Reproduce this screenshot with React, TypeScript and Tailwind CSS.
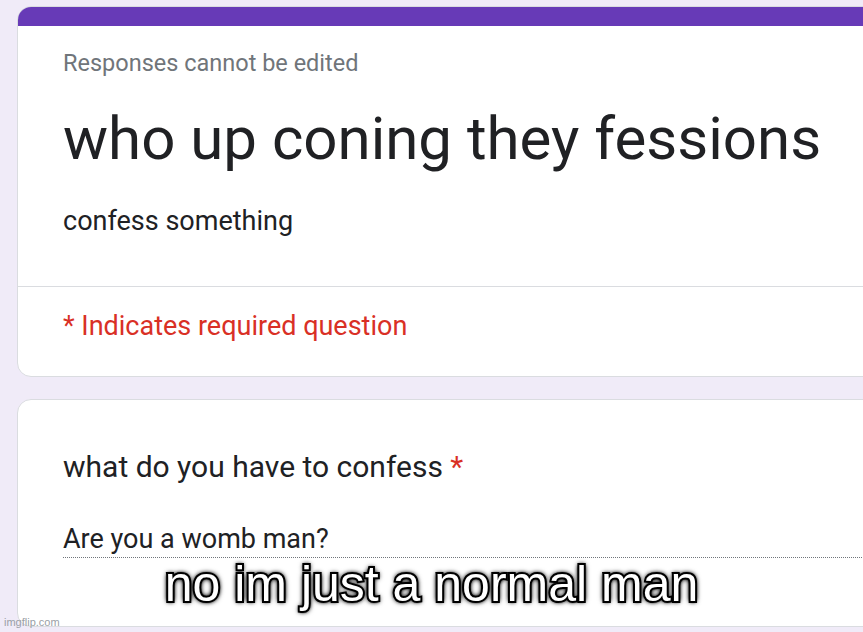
const roboto = { fontFamily: 'Roboto, "Liberation Sans", sans-serif' };

export default function App() {
    return (
        <div
            className="relative w-[863px] h-[632px] overflow-hidden bg-[#f0ebf8] pt-[6px]"
            style={roboto}
        >
            {/* header card */}
            <div className="ml-[17px] w-[900px] rounded-[14px] border border-[#dadce0] bg-white overflow-hidden">
                <div className="h-[19px] bg-[#673ab7]" />
                <div className="pl-[45px] pt-[21px] pb-[47px]">
                    <div className="text-[23.5px] leading-[32px] text-[#70757a]">
                        Responses cannot be edited
                    </div>
                    <div className="mt-[24px] text-[60px] leading-[72px] text-[#202124]">
                        who up coning they fessions
                    </div>
                    <div className="mt-[28px] text-[27px] leading-[36px] text-[#202124]">
                        confess something
                    </div>
                </div>
                <div className="h-px bg-[#dadce0]" />
                <div className="pl-[45px] pt-[21px] pb-[32px] text-[27px] leading-[36px] text-[#d93025]">
                    * Indicates required question
                </div>
            </div>

            {/* question card */}
            <div className="mt-[22px] ml-[17px] w-[900px] h-[228px] rounded-[14px] border border-[#dadce0] bg-white pl-[45px] pt-[47px]">
                <div className="text-[30px] leading-[40px] text-[#202124]">
                    what do you have to confess <span className="text-[#d93025]">*</span>
                </div>
                <div className="mt-[34px] border-b border-dotted border-[#70757a] text-[27px] leading-[36px] text-[#202124]">
                    Are you a womb man?
                </div>
            </div>

            {/* meme caption */}
            <div
                className="absolute left-0 right-0 top-[559px] text-center text-[50px] leading-[50px] text-white [-webkit-text-stroke:4px_#000] [text-shadow:0_0_3px_#000,0_0_4px_#000,0_0_5px_#000,0_0_6px_#000]"
                style={{ fontFamily: '"Liberation Sans", Arial, sans-serif', paintOrder: 'stroke fill' }}
            >
                no im just a normal man
            </div>

            <div
                className="absolute left-[4px] top-[615px] text-[11px] leading-[14px] text-[#9aa0a6]"
                style={{ fontFamily: '"Liberation Sans", Arial, sans-serif' }}
            >
                imgflip.com
            </div>
        </div>
    );
}
